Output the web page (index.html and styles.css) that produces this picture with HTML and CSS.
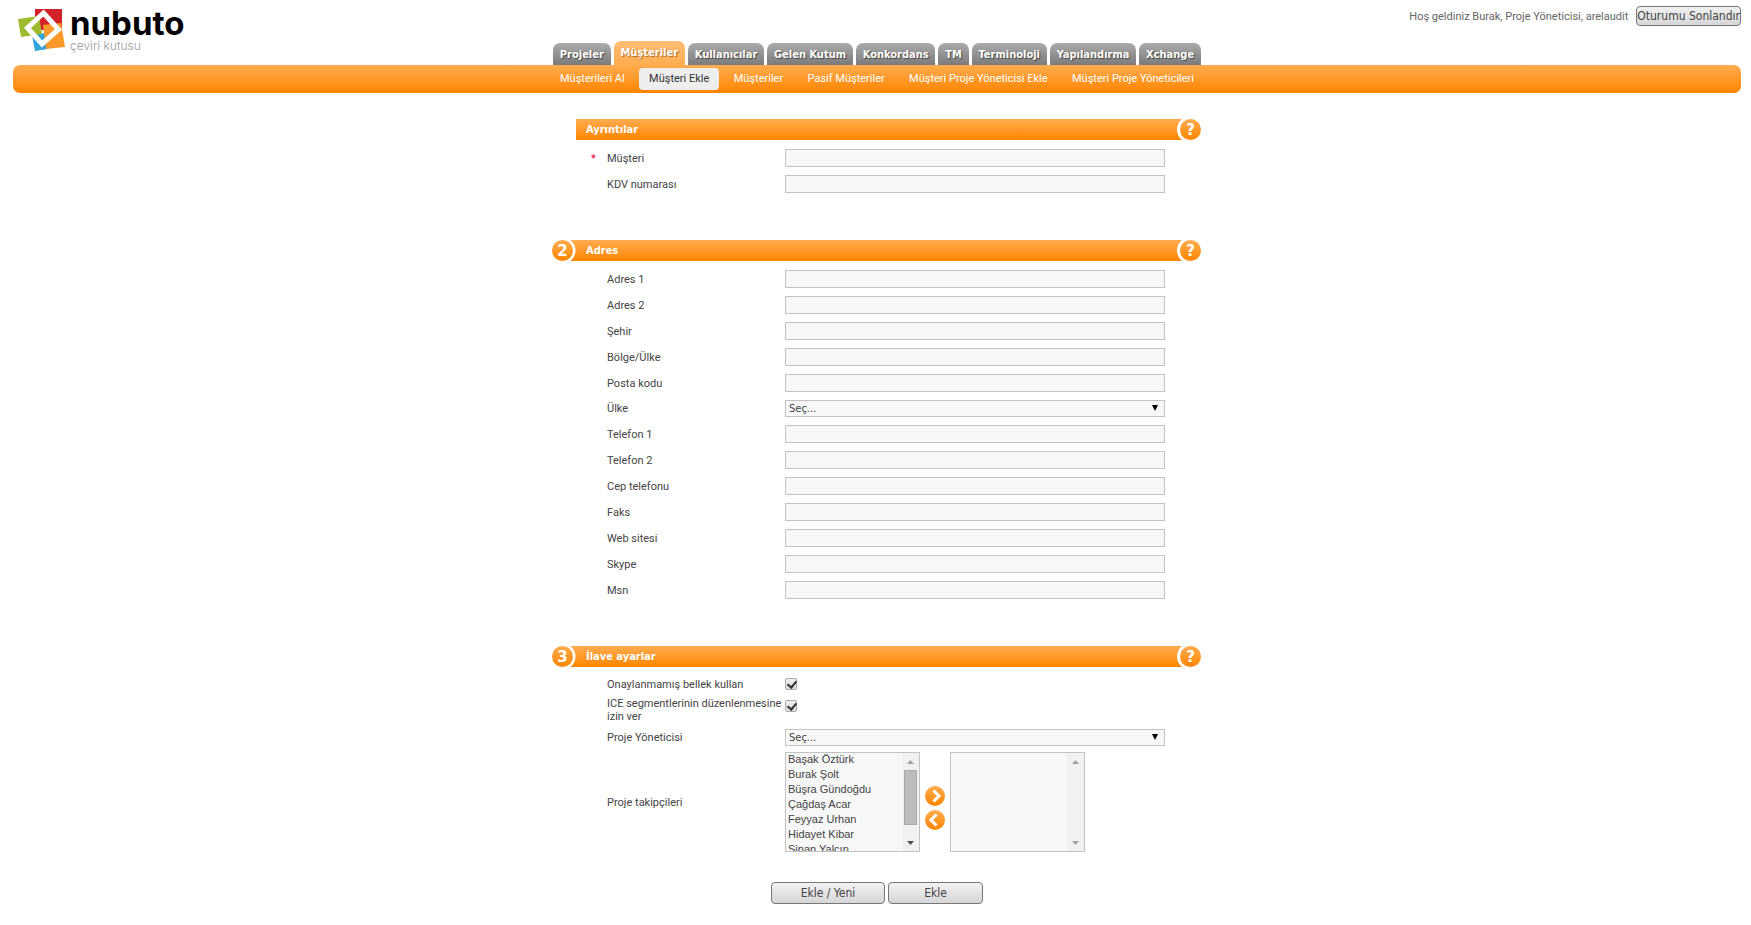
FILE: index.html
```html
<!DOCTYPE html>
<html lang="tr">
<head>
<meta charset="utf-8">
<title>nubuto - Müşteri Ekle</title>
<link rel="stylesheet" href="styles.css">
</head>
<body>
<svg class="defs" width="0" height="0" aria-hidden="true">
  <defs>
    <linearGradient id="orange" x1="0" y1="0" x2="0" y2="1"><stop offset="0" stop-color="#ffac50"/><stop offset="1" stop-color="#ff8500"/></linearGradient>
    <symbol id="num" viewBox="0 0 24 21">
      <rect x="18" width="6" height="21" fill="url(#orange)"/>
      <circle cx="10.500" cy="10.500" r="13" fill="#fff"/>
      <circle cx="10.500" cy="10.500" r="10.500" fill="url(#orange)"/>
    </symbol>
    <symbol id="help" viewBox="0 0 25 21">
      <rect width="7" height="21" fill="url(#orange)"/>
      <circle cx="14.500" cy="10.500" r="13.500" fill="#fff"/>
      <circle cx="14.500" cy="10.500" r="10.500" fill="url(#orange)"/>
    </symbol>
  </defs>
</svg>

<header class="header">
  <a class="logo" href="#" aria-label="nubuto çeviri kutusu">
    <svg width="48" height="46" viewBox="0 0 48 46" aria-hidden="true">
      <path d="M17 1H44V22H17Z" fill="#d2232a"/>
      <path d="M14 27 28 25 30 41 17 43Z" fill="#2ea3dc"/>
      <path d="M0 11 21 8 24 26 3 29Z" fill="#9dbb2c"/>
      <path d="M25 17 43 15 47 39 28 41Z" fill="#fb9a2b"/>
      <path d="M25.500 5 40.500 21.500 24 36 9.500 20Z" fill="none" stroke="#fff" stroke-width="5"/>
    </svg>
    <span class="logo-text"><span class="brand">nubuto</span><span class="tagline">çeviri kutusu</span></span>
  </a>
  <div class="user">
    <span>Hoş geldiniz Burak, Proje Yöneticisi, arelaudit</span>
    <button class="btn logout" type="button">Oturumu Sonlandır</button>
  </div>
</header>

<nav class="tabs" aria-label="Ana menü">
  <a href="#">Projeler</a><a href="#" class="active">Müşteriler</a><a href="#">Kullanıcılar</a><a href="#">Gelen Kutum</a><a href="#">Konkordans</a><a href="#">TM</a><a href="#">Terminoloji</a><a href="#">Yapılandırma</a><a href="#">Xchange</a>
</nav>
<nav class="subnav" aria-label="Alt menü">
  <div class="subnav-items">
    <a href="#">Müşterileri Al</a><a href="#" class="active">Müşteri Ekle</a><a href="#">Müşteriler</a><a href="#">Pasif Müşteriler</a><a href="#">Müşteri Proje Yöneticisi Ekle</a><a href="#">Müşteri Proje Yöneticileri</a>
  </div>
</nav>

<main>
<form class="form">
  <section class="section">
    <div class="section-head">
      <span class="num"></span>
      <h2>Ayrıntılar</h2>
      <button class="help" type="button" aria-label="Yardım"><svg width="25" height="21"><use href="#help"/><text x="14.500" y="16">?</text></svg></button>
    </div>
    <div class="rows">
      <div class="row"><label for="musteri"><span class="req">*</span>Müşteri</label><input type="text" id="musteri" required></div>
      <div class="row"><label for="kdv">KDV numarası</label><input type="text" id="kdv"></div>
    </div>
  </section>

  <section class="section">
    <div class="section-head">
      <svg class="num" width="24" height="21"><use href="#num"/><text x="10.500" y="16">2</text></svg>
      <h2>Adres</h2>
      <button class="help" type="button" aria-label="Yardım"><svg width="25" height="21"><use href="#help"/><text x="14.500" y="16">?</text></svg></button>
    </div>
    <div class="rows">
      <div class="row"><label for="adres1">Adres 1</label><input type="text" id="adres1"></div>
      <div class="row"><label for="adres2">Adres 2</label><input type="text" id="adres2"></div>
      <div class="row"><label for="sehir">Şehir</label><input type="text" id="sehir"></div>
      <div class="row"><label for="bolge">Bölge/Ülke</label><input type="text" id="bolge"></div>
      <div class="row"><label for="posta">Posta kodu</label><input type="text" id="posta"></div>
      <div class="row"><label for="ulke">Ülke</label><span class="dropdown"><select id="ulke"><option>Seç...</option></select></span></div>
      <div class="row"><label for="tel1">Telefon 1</label><input type="text" id="tel1"></div>
      <div class="row"><label for="tel2">Telefon 2</label><input type="text" id="tel2"></div>
      <div class="row"><label for="cep">Cep telefonu</label><input type="text" id="cep"></div>
      <div class="row"><label for="faks">Faks</label><input type="text" id="faks"></div>
      <div class="row"><label for="web">Web sitesi</label><input type="text" id="web"></div>
      <div class="row"><label for="skype">Skype</label><input type="text" id="skype"></div>
      <div class="row"><label for="msn">Msn</label><input type="text" id="msn"></div>
    </div>
  </section>

  <section class="section">
    <div class="section-head">
      <svg class="num" width="24" height="21"><use href="#num"/><text x="10.500" y="16">3</text></svg>
      <h2>İlave ayarlar</h2>
      <button class="help" type="button" aria-label="Yardım"><svg width="25" height="21"><use href="#help"/><text x="14.500" y="16">?</text></svg></button>
    </div>
    <div class="rows settings">
      <div class="row"><label for="bellek">Onaylanmamış bellek kullan</label><input type="checkbox" id="bellek" checked></div>
      <div class="row multiline"><label for="ice">ICE segmentlerinin düzenlenmesine izin ver</label><input type="checkbox" id="ice" checked></div>
      <div class="row"><label for="yonetici">Proje Yöneticisi</label><span class="dropdown"><select id="yonetici"><option>Seç...</option></select></span></div>
      <div class="row">
        <label for="takipci">Proje takipçileri</label>
        <div class="picker">
          <div class="listbox">
            <select id="takipci" multiple size="6"><option>Başak Öztürk</option><option>Burak Şolt</option><option>Büşra Gündoğdu</option><option>Çağdaş Acar</option><option>Feyyaz Urhan</option><option>Hidayet Kibar</option><option>Sinan Yalçın</option></select>
            <svg width="17" height="98" aria-hidden="true"><rect width="17" height="98" fill="#f1f1f1"/><path d="M5 11H12L8.500 7Z" fill="#a3a3a3"/><rect x="2.500" y="17.500" width="12" height="54" fill="#bcbcbc" stroke="#a8a8a8"/><path d="M5 88H12L8.500 92Z" fill="#505050"/></svg>
          </div>
          <div class="movers">
            <button type="button" aria-label="Ekle"><svg width="20" height="20"><circle cx="10" cy="10" r="10" fill="url(#orange)"/><path d="M8.500 4.500 14 10 8.500 15.500" fill="none" stroke="#fff" stroke-width="3"/></svg></button>
            <button type="button" aria-label="Çıkar"><svg width="20" height="20"><circle cx="10" cy="10" r="10" fill="url(#orange)"/><path d="M11.500 4.500 6 10 11.500 15.500" fill="none" stroke="#fff" stroke-width="3"/></svg></button>
          </div>
          <div class="listbox">
            <select multiple size="6" aria-label="Seçilen takipçiler"></select>
            <svg width="17" height="98" aria-hidden="true"><rect width="17" height="98" fill="#f1f1f1"/><path d="M5 11H12L8.500 7Z" fill="#a3a3a3"/><path d="M5 88H12L8.500 92Z" fill="#a3a3a3"/></svg>
          </div>
        </div>
      </div>
    </div>
  </section>

  <div class="actions">
    <button class="btn wide" type="submit">Ekle / Yeni</button>
    <button class="btn" type="submit">Ekle</button>
  </div>
</form>
</main>
</body>
</html>
```

FILE: styles.css
```css
* { box-sizing: border-box; }

body {
  margin: 0;
  padding: 6px 10px 20px 13px;
  background: #fff;
  color: #444;
  font: 11px/13px Roboto, "Noto Sans", sans-serif;
}

.defs { position: absolute; }

a { color: inherit; text-decoration: none; }

/* Header */
.header {
  display: flex;
  justify-content: space-between;
  align-items: flex-start;
  height: 35px;
}

.logo { display: flex; gap: 4px; padding: 2px 0 0 5px; }
.logo svg { flex: none; }
.logo-text { display: flex; flex-direction: column; }
.brand {
  color: #000;
  font: 700 33px/31px Inter, sans-serif;
}
.tagline {
  color: #999;
  font: 300 12px/14px Inter, sans-serif;
}

.user { display: flex; align-items: center; gap: 8px; color: #666; }

.btn {
  height: 22px;
  min-width: 95px;
  padding: 0;
  border: 1px solid #777;
  border-radius: 4px;
  background: linear-gradient(#f2f2f4, #d6d6d9);
  color: #444;
  font: 12px/20px "DejaVu Sans Condensed", "Noto Sans", sans-serif;
}
.btn.wide { min-width: 114px; }
.btn.logout { height: 20px; min-width: 104px; line-height: 18px; }

/* Main tabs */
.tabs {
  display: flex;
  align-items: flex-end;
  gap: 3px;
  width: 648px;
  margin: 0 auto;
}
.tabs a {
  flex: 1 1 auto;
  height: 22px;
  border-radius: 7px 7px 0 0;
  background: linear-gradient(#ababab, #7b7b7b);
  color: #fff;
  font: bold 11px/23px "DejaVu Sans Condensed", "Noto Sans", sans-serif;
  text-align: center;
  text-shadow: 1px 1px 1px #444;
}
.tabs .active {
  height: 24px;
  background: linear-gradient(#ffbd75, #ffac50);
  text-shadow: 1px 1px 1px #a66a28;
}

/* Sub navigation */
.subnav {
  height: 28px;
  padding: 3px 0;
  border-radius: 7px;
  background: linear-gradient(#ffac50, #ff8500);
}
.subnav-items {
  display: flex;
  justify-content: space-between;
  width: 654px;
  margin: 0 auto;
  white-space: nowrap;
}
.subnav a {
  padding: 0 10px;
  border-radius: 4px;
  color: #fff;
  line-height: 22px;
}
.subnav .active { background: #eee; color: #333; }

/* Form */
.form { width: 650px; margin: 26px auto 0; padding-right: 1px; }

.section { margin-bottom: 47px; }
.section-head { display: flex; height: 21px; }
.section-head .num { flex: none; width: 24px; }
.section-head h2 {
  flex: 1;
  margin: 0;
  padding-left: 10px;
  background: linear-gradient(#ffac50, #ff8500);
  color: #fff;
  font: bold 11px/21px "DejaVu Sans Condensed", "Noto Sans", sans-serif;
}
.section-head text {
  fill: #fff;
  font: bold 15px "DejaVu Sans", sans-serif;
  text-anchor: middle;
}
.help { padding: 0; border: 0; background: none; }
.help svg { display: block; }

.rows { display: grid; gap: 8px; padding: 9px 36px 0 55px; }
.row {
  display: grid;
  grid-template-columns: 178px 1fr;
  align-items: center;
}
.row label { position: relative; }
.req { position: absolute; left: -16px; color: #f00032; }

.row input[type="text"],
.dropdown select {
  width: 100%;
  height: 18px;
  border: 1px solid #c3c3c3;
  border-radius: 0;
  background: #f7f7f7;
  color: #444;
  font: 11px/13px "DejaVu Sans Condensed", "Noto Sans", sans-serif;
}
.dropdown { display: block; position: relative; }
.dropdown select { display: block; height: 17px; padding: 0 3px; appearance: none; }
.dropdown::after {
  content: "";
  position: absolute;
  top: 5px;
  right: 7px;
  border: solid transparent;
  border-width: 6px 3px 0;
  border-top-color: #000;
}

.row input[type="checkbox"] {
  appearance: none;
  width: 12px;
  height: 12px;
  margin: 0;
  border: 1px solid #aaa;
  border-radius: 2px;
  background: linear-gradient(#f0f0f0, #dcdcdc);
}
.row input[type="checkbox"]:checked::after {
  content: "";
  display: block;
  width: 4px;
  height: 7px;
  margin: 0 0 0 3px;
  border: solid #333;
  border-width: 0 2px 2px 0;
  transform: rotate(40deg);
}

.settings { gap: 6px; padding-top: 10px; }
.settings .row { min-height: 14px; }
.multiline { align-items: start; }
.row.multiline input[type="checkbox"] { margin-top: 3px; }

/* Follower picker */
.picker { display: flex; align-items: center; gap: 5px; }
.listbox {
  display: flex;
  width: 135px;
  height: 100px;
  border: 1px solid #c3c3c3;
  background: #f7f7f7;
}
.listbox svg { flex: none; }
.listbox select {
  flex: 1;
  min-width: 0;
  height: 98px;
  padding: 0;
  border: 0;
  border-radius: 0;
  background: none;
  color: #444;
  font: 11px/15px "Liberation Sans", Arial, sans-serif;
  scrollbar-width: none;
}
.listbox option { min-height: 15px; padding: 0 2px; line-height: 15px; }
.movers { display: grid; gap: 4px; padding-top: 12px; }
.movers button { padding: 0; border: 0; background: none; }
.movers svg { display: block; }

.actions { display: flex; gap: 3px; margin-top: 30px; padding-left: 219px; }
.section:has(+ .actions) { margin-bottom: 0; }
```
